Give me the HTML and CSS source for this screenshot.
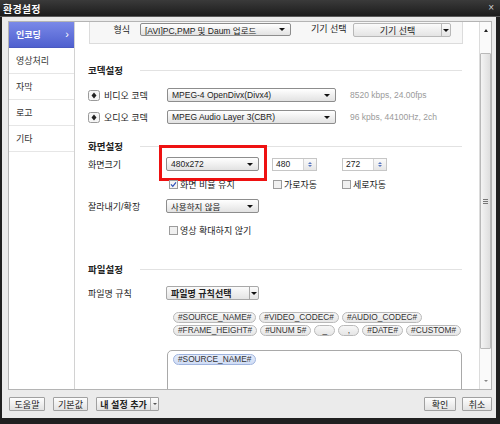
FILE: index.html
```html
<!DOCTYPE html>
<html lang="ko">
<head>
<meta charset="utf-8">
<title>환경설정</title>
<link rel="stylesheet" href="styles.css">
</head>
<body>
<div class="win">
  <div class="titlebar">
    <span class="title">환경설정</span>
    <span class="close">×</span>
  </div>
  <div class="frame">
    <div class="panel">
      <ul class="sidebar">
        <li class="tab active">인코딩<span class="chev">›</span></li>
        <li class="tab">영상처리</li>
        <li class="tab">자막</li>
        <li class="tab">로고</li>
        <li class="tab">기타</li>
      </ul>
      <div class="main">
        <div class="topbox">
          <span class="tlabel">형식</span>
          <div class="select sel-format"><span>[AVI]PC,PMP 및 Daum 업로드</span><i class="arr"></i></div>
          <span class="tlabel2">기기 선택</span>
          <div class="splitbtn device"><span class="sb-text">기기 선택</span><span class="sb-arr"><i class="arr"></i></span></div>
        </div>

        <div class="heading h1"><span>코덱설정</span><i class="hline"></i></div>

        <div class="row r-video">
          <span class="toggle"><svg width="12" height="11" viewBox="0 0 12 11"><rect x="0.5" y="0.5" width="11" height="10" rx="2" fill="#f6f6f6" stroke="#9a9a9a"/><path d="M6 2.5 L8.5 5.5 L6 8.5 L3.5 5.5 Z" fill="#222"/></svg></span>
          <span class="clabel">비디오 코덱</span>
          <div class="select sel-codec"><span>MPEG-4 OpenDivx(Divx4)</span><i class="arr"></i></div>
          <span class="info">8520 kbps, 24.00fps</span>
        </div>
        <div class="row r-audio">
          <span class="toggle"><svg width="12" height="11" viewBox="0 0 12 11"><rect x="0.5" y="0.5" width="11" height="10" rx="2" fill="#f6f6f6" stroke="#9a9a9a"/><path d="M6 2.5 L8.5 5.5 L6 8.5 L3.5 5.5 Z" fill="#222"/></svg></span>
          <span class="clabel">오디오 코덱</span>
          <div class="select sel-codec"><span>MPEG Audio Layer 3(CBR)</span><i class="arr"></i></div>
          <span class="info">96 kpbs, 44100Hz, 2ch</span>
        </div>

        <div class="heading h2"><span>화면설정</span><i class="hline"></i></div>

        <div class="row r-size">
          <span class="flabel">화면크기</span>
          <div class="select sel-std"><span>480x272</span><i class="arr"></i></div>
          <div class="num n1"><span class="nv">480</span><span class="spin"><i class="up"></i><i class="dn"></i></span></div>
          <div class="num n2"><span class="nv">272</span><span class="spin"><i class="up"></i><i class="dn"></i></span></div>
          <div class="redbox"></div>
        </div>
        <div class="row r-checks">
          <label class="chk c1"><svg width="9" height="9" viewBox="0 0 9 9"><rect x="0.5" y="0.5" width="8" height="8" fill="#f4f4f4" stroke="#9c9c9c"/><path d="M2 4.3 L3.8 6.3 L7 2.3" fill="none" stroke="#2b4fb8" stroke-width="1.2"/></svg>화면 비율 유지</label>
          <label class="chk c2"><svg width="9" height="9" viewBox="0 0 9 9"><rect x="0.5" y="0.5" width="8" height="8" fill="#f0f0f0" stroke="#9c9c9c"/></svg>가로자동</label>
          <label class="chk c3"><svg width="9" height="9" viewBox="0 0 9 9"><rect x="0.5" y="0.5" width="8" height="8" fill="#f0f0f0" stroke="#9c9c9c"/></svg>세로자동</label>
        </div>
        <div class="row r-crop">
          <span class="flabel">잘라내기/확장</span>
          <div class="select sel-std"><span>사용하지 않음</span><i class="arr"></i></div>
        </div>
        <div class="row r-noscale">
          <label class="chk c1"><svg width="9" height="9" viewBox="0 0 9 9"><rect x="0.5" y="0.5" width="8" height="8" fill="#f0f0f0" stroke="#9c9c9c"/></svg>영상 확대하지 않기</label>
        </div>

        <div class="heading h3"><span>파일설정</span><i class="hline"></i></div>

        <div class="row r-rule">
          <span class="flabel">파일명 규칙</span>
          <div class="splitbtn rule"><span class="sb-text">파일명 규칙선택</span><span class="sb-arr"><i class="arr"></i></span></div>
        </div>
        <div class="tags t1">
          <span class="tag">#SOURCE_NAME#</span>
          <span class="tag">#VIDEO_CODEC#</span>
          <span class="tag">#AUDIO_CODEC#</span>
        </div>
        <div class="tags t2">
          <span class="tag">#FRAME_HEIGHT#</span>
          <span class="tag">#UNUM 5#</span>
          <span class="tag sym">_</span>
          <span class="tag sym">,</span>
          <span class="tag">#DATE#</span>
          <span class="tag">#CUSTOM#</span>
        </div>
        <div class="namebox">
          <span class="tag blue">#SOURCE_NAME#</span>
        </div>
      </div>
      <div class="scrollbar">
        <span class="sarrow"><i class="tri-up"></i></span>
        <div class="strack">
          <div class="thumb"><i class="grip"></i></div>
        </div>
        <span class="sarrow"><i class="tri-dn"></i></span>
      </div>
    </div>
    <div class="buttons">
      <span class="btn b-help">도움말</span>
      <span class="btn b-def">기본값</span>
      <span class="btn split b-add"><span class="bt">내 설정 추가</span><span class="ba"><i class="arr small"></i></span></span>
      <span class="spacer"></span>
      <span class="btn b-ok">확인</span>
      <span class="btn b-cancel">취소</span>
    </div>
  </div>
</div>
</body>
</html>
```
FILE: styles.css
```css
* { box-sizing: border-box; }
html, body { margin: 0; padding: 0; }
body {
  width: 500px; height: 424px; overflow: hidden;
  font-family: "Liberation Sans", "Noto Sans CJK KR", sans-serif;
  font-size: 9px; color: #222;
  background: #1f1f1f;
}
.win {
  width: 500px; height: 424px;
  display: flex; flex-direction: column;
  background: #202020;
}
.titlebar {
  height: 17px; flex: none;
  display: flex; align-items: center; justify-content: space-between;
  padding: 0 6px 0 3px;
  background: linear-gradient(#3a3a3a, #1c1c1c);
  border-bottom: 1px solid #5a5a5a;
}
.title { color: #fff; font-weight: bold; font-size: 10px; letter-spacing: 0.2px; }
.close { color: #cfcfcf; font-size: 10px; line-height: 1; }

.frame {
  flex: 1;
  margin: 0 4px 6px 2px;
  background: #ebebeb;
  padding: 4px 4px 0 6px;
  display: flex; flex-direction: column;
}
.panel {
  height: 369px; flex: none;
  display: flex;
  border: 1px solid #b4b4b4;
  background: #fff;
}
.sidebar {
  list-style: none; margin: 0; padding: 0;
  width: 66px; flex: none;
  border-right: 1px solid #d2d2d2;
  background: #fff;
}
.tab {
  height: 26px;
  display: flex; align-items: center;
  padding-left: 7px;
  border-bottom: 1px solid #e6e6e6;
  color: #333; font-size: 9px;
}
.tab.active {
  background: linear-gradient(#7a89e8, #4f60cf);
  color: #fff; font-weight: bold;
  justify-content: space-between; padding-right: 5px;
  border-bottom: 1px solid #4a59c0;
}
.chev { font-size: 11px; font-weight: normal; line-height: 1; }

.main {
  flex: 1; overflow: hidden;
  position: relative;
  padding: 0 17px 0 13px;
  display: flex; flex-direction: column;
}
.topbox {
  flex: none;
  margin-left: 1px; width: 374px; height: 22px;
  background: #f7f7f7;
  border: 1px solid #dcdcdc; border-top: none;
  display: flex; align-items: flex-start;
  padding-top: 1px;
}
.tlabel { flex: none; width: 40px; text-align: right; line-height: 12px; margin-top: 1px; }
.sel-format { flex: none; width: 151px; margin-left: 10px; }
.tlabel2 { flex: none; width: 36px; margin-left: 20px; line-height: 12px; white-space: nowrap; }
.device { flex: none; width: 98px; margin-left: 6px; }

.select {
  height: 13px;
  display: flex; align-items: center; justify-content: space-between;
  padding: 0 5px 0 4px;
  border: 1px solid #8d8d8d; border-radius: 2px;
  background: linear-gradient(#ffffff, #e2e2e2);
  font-size: 8.5px; color: #222;
  white-space: nowrap; overflow: hidden;
}
.arr {
  display: inline-block; width: 0; height: 0;
  border-left: 3px solid transparent; border-right: 3px solid transparent;
  border-top: 3px solid #111;
  flex: none;
}
.splitbtn {
  height: 14px;
  display: flex;
  border: 1px solid #b8b8b8; border-radius: 2px;
  background: linear-gradient(#fbfbfb, #e4e4e4);
}
.sb-text { flex: 1; display: flex; align-items: center; justify-content: center; }
.sb-arr { width: 9px; border-left: 1px solid #b8b8b8; display: flex; align-items: center; justify-content: center; }
.rule { width: 93px; border-color: #a8a8a8; }
.rule .sb-text { justify-content: flex-start; padding-left: 4px; font-weight: bold; }
.rule .sb-arr { border-color: #a8a8a8; }

.heading {
  flex: none; height: 12px;
  display: flex; align-items: center;
  font-weight: bold; font-size: 9.5px; color: #222;
}
.heading span { width: 52px; }
.hline { flex: 1; height: 1px; background: #e2e2e2; }
.h1 { margin-top: 20px; }
.h2 { margin-top: 16px; }
.h3 { margin-top: 28px; }

.row { flex: none; display: flex; align-items: center; position: relative; height: 14px; }
.row > * { flex: none; }
.r-video { margin-top: 12px; }
.r-audio { margin-top: 8px; }
.toggle { width: 12px; height: 11px; display: flex; }
.clabel { width: 63px; margin-left: 4px; }
.sel-codec { width: 169px; height: 14px; }
.info { margin-left: 14px; color: #9a9a9a; font-size: 8.5px; }

.r-size { margin-top: 5px; }
.flabel { width: 78px; }
.sel-std { width: 93px; height: 14px; }
.num {
  height: 13px; width: 45px;
  display: flex;
  border: 1px solid #c6c6c6; background: #fff;
  font-size: 8.5px;
}
.n1 { margin-left: 13px; }
.n2 { margin-left: 25px; }
.nv { flex: 1; padding-left: 3px; display: flex; align-items: center; }
.spin {
  width: 13px; border-left: 1px solid #d4d4d4;
  background: linear-gradient(#fafafa, #e6e6e6);
  display: flex; flex-direction: column; align-items: center; justify-content: center; gap: 1px;
}
.spin .up { width: 0; height: 0; border-left: 2.5px solid transparent; border-right: 2.5px solid transparent; border-bottom: 2.5px solid #5a78c0; }
.spin .dn { width: 0; height: 0; border-left: 2.5px solid transparent; border-right: 2.5px solid transparent; border-top: 2.5px solid #5a78c0; }
.redbox {
  position: absolute; left: 71px; top: -12px;
  width: 108px; height: 36px;
  border: 3px solid #ee1111;
}

.r-checks { margin-top: 8px; height: 10px; }
.chk { display: flex; align-items: center; gap: 2px; white-space: nowrap; }
.chk svg { flex: none; }
.c1 { margin-left: 81px; width: 104px; }
.c2 { width: 69px; }
.r-crop { margin-top: 10px; }
.r-noscale { margin-top: 12px; height: 10px; }

.r-rule { margin-top: 11px; }
.tags { flex: none; display: flex; gap: 3px; padding-left: 85px; }
.t1 { margin-top: 12px; }
.t2 { margin-top: 2px; }
.tag {
  height: 11px; line-height: 9px;
  padding: 0 4px;
  border: 1px solid #b9b9b9; border-radius: 6px;
  background: linear-gradient(#f7f7f7, #e6e6e6);
  font-size: 8.3px; color: #333; white-space: nowrap;
  text-align: center;
}
.tag.sym { min-width: 21px; }
.tag.blue { background: linear-gradient(#e6edfb, #cfdcf5); border-color: #9fb4de; display: inline-block; }
.namebox {
  flex: none;
  margin-top: 14px; margin-left: 79px;
  height: 60px;
  border: 1px solid #a9a9a9; border-radius: 5px;
  padding: 3px 0 0 5px;
}

.scrollbar {
  width: 12px; flex: none;
  border-left: 1px solid #dcdcdc;
  background: #fafafa;
  display: flex; flex-direction: column;
}
.sarrow { height: 17px; display: flex; align-items: center; justify-content: center; }
.tri-up { width: 0; height: 0; border-left: 2.5px solid transparent; border-right: 2.5px solid transparent; border-bottom: 3px solid #222; }
.tri-dn { width: 0; height: 0; border-left: 2px solid transparent; border-right: 2px solid transparent; border-top: 2px solid #888; }
.strack { flex: 1; padding-top: 14px; padding-bottom: 23px; display: flex; }
.thumb {
  flex: 1;
  border: 1px solid #b9b9b9; border-radius: 1px;
  background: linear-gradient(90deg, #f4f4f4, #dedede);
  display: flex; align-items: center; justify-content: center;
}
.grip { width: 5px; height: 5px; border-top: 1px solid #777; border-bottom: 1px solid #777; position: relative; }
.grip::after { content: ""; position: absolute; left: 0; right: 0; top: 1px; height: 1px; background: #777; }

.buttons {
  flex: 1;
  display: flex; align-items: center;
  padding-left: 1px;
  gap: 8px;
}
.btn {
  height: 14px;
  display: flex; align-items: center; justify-content: center;
  border: 1px solid #a0a0a0; border-radius: 1px;
  background: linear-gradient(#fdfdfd, #e2e2e2);
  font-size: 9px; color: #222;
}
.b-help { width: 36px; }
.b-def { width: 35px; }
.b-add { width: 63px; justify-content: flex-start; }
.b-add .bt { width: 54px; text-align: center; font-weight: bold; }
.b-add .ba { width: 8px; height: 100%; border-left: 1px solid #b0b0b0; display: flex; align-items: center; justify-content: center; }
.arr.small { border-left-width: 2px; border-right-width: 2px; border-top-width: 2px; border-top-color: #555; }
.spacer { flex: 1; }
.b-ok { width: 32px; margin-right: -2px; }
.b-cancel { width: 30px; }
```
